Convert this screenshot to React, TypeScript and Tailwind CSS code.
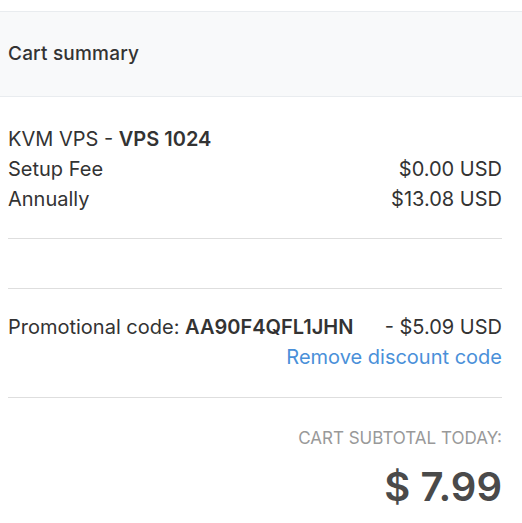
export default function App() {
  return (
    <div className="w-[522px] h-[523px] bg-white overflow-hidden text-[#333]" style={{ fontFamily: "Inter, 'Noto Sans', sans-serif" }}>
      <div className="mt-[11px] border-t border-[#e9ecef]">
        <div className="h-[85px] bg-[#f8f9fa] border-b border-[#e9ecef] flex items-center px-2">
          <span className="text-[19px] font-medium tracking-[0.2px] text-[#333]">Cart summary</span>
        </div>
        <div className="px-2 pr-5">
          <div className="pt-[27px] text-[20px] leading-[30px]">
            <div>KVM VPS - <span className="font-semibold">VPS 1024</span></div>
            <div className="flex justify-between"><span>Setup Fee</span><span>$0.00 USD</span></div>
            <div className="flex justify-between"><span>Annually</span><span>$13.08 USD</span></div>
          </div>
          <div className="mt-[24px] border-t border-[#dedede] h-[50px]"></div>
          <div className="border-t border-[#dedede] pt-[23px] pb-[25px] text-[20px] leading-[30px]">
            <div className="flex justify-between">
              <span>Promotional code: <span className="font-semibold">AA90F4QFL1JHN</span></span>
              <span>- $5.09 USD</span>
            </div>
            <div className="text-right text-[#4a90d9]">Remove discount code</div>
          </div>
          <div className="border-t border-[#dedede] pt-[28px] text-right">
            <div className="text-[17px] leading-[24px] text-[#999]">CART SUBTOTAL TODAY:</div>
            <div className="text-[40px] leading-[50px] font-semibold text-[#4a4a4a] mt-[12px]">$ 7.99</div>
          </div>
        </div>
      </div>
    </div>
  );
}
